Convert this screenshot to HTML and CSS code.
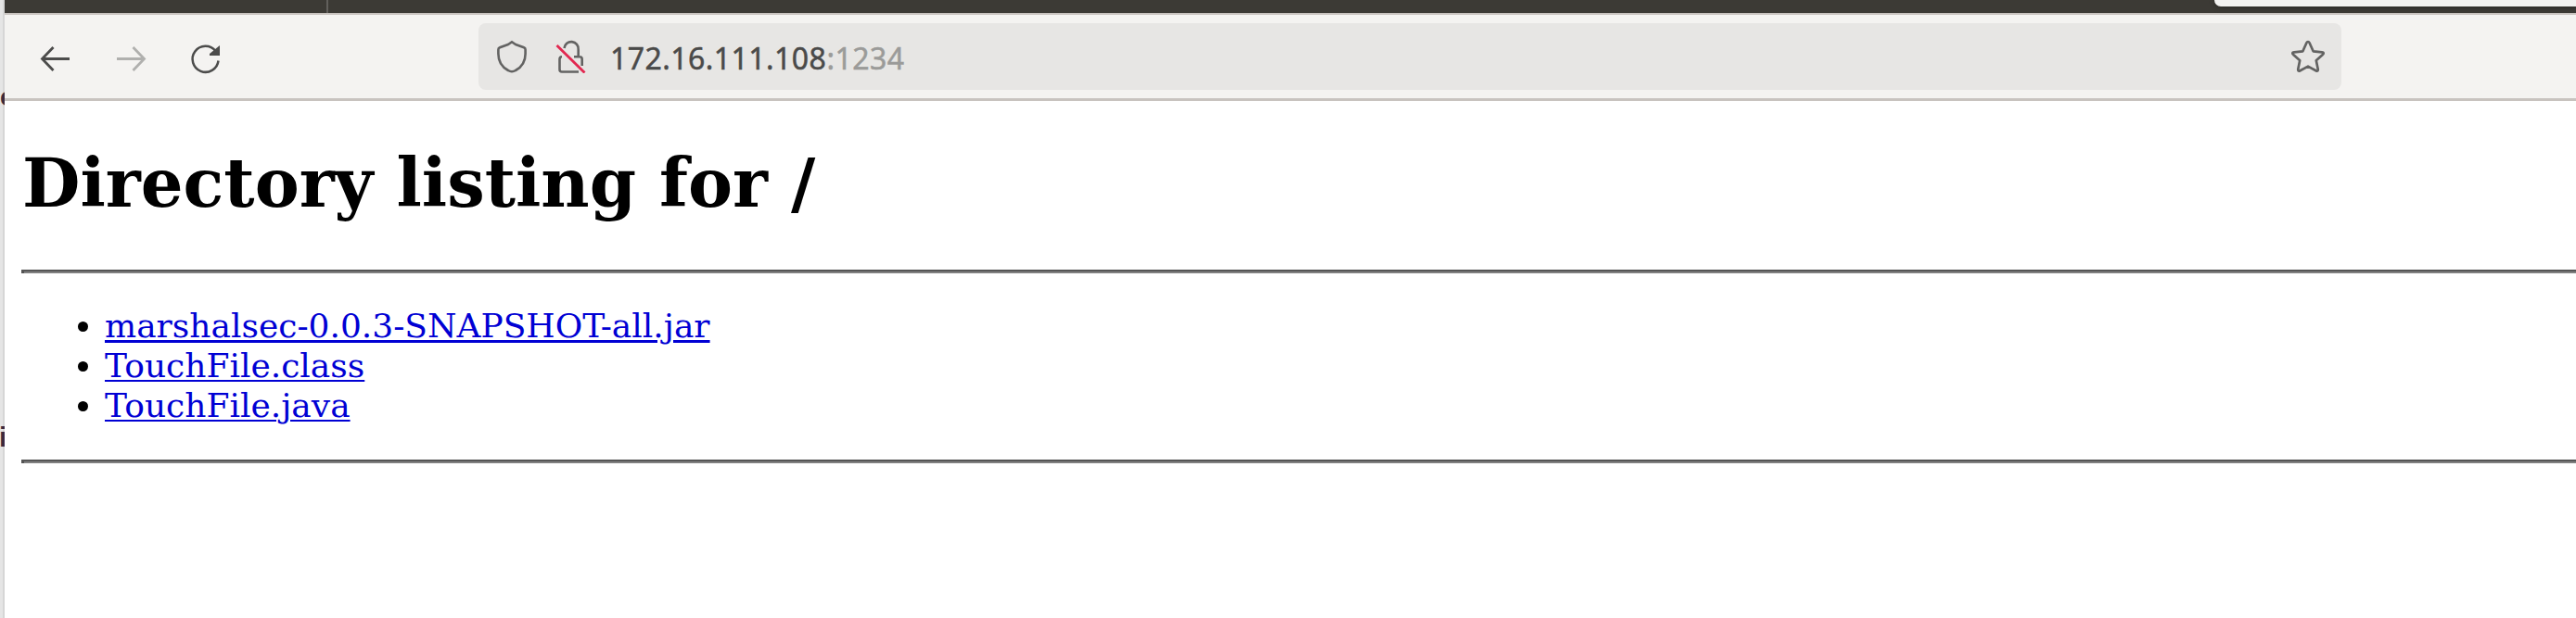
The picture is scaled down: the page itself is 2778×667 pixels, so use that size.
FILE: index.html
```html
<!DOCTYPE html>
<html lang="en">
<head>
<meta charset="utf-8">
<title>Directory listing for /</title>
<link rel="stylesheet" href="styles.css">
</head>
<body>
<div class="desktop">
  <div class="behind"><span class="peek peek-e">e</span><span class="peek peek-i">i</span></div>
  <div class="window">
    <div class="tabstrip"><div class="tab-first"></div><div class="tab-gap"></div><div class="popup-edge"></div></div>
    <div class="toolbar">
      <div class="nav">
        <svg class="icon" viewBox="0 0 36 36"><path d="M33 18.500H4M15.500 6 3.500 18.500l12 12.500" fill="none" stroke="#4c4c4b" stroke-width="2.800"/></svg>
        <svg class="icon" viewBox="0 0 36 36"><path d="M3 18.500h29M20.500 6l12 12.500-12 12.500" fill="none" stroke="#b0b0ae" stroke-width="2.800"/></svg>
        <svg class="icon" viewBox="0 0 36 36"><path d="M31.500 20.500A14 14 0 1 1 28.500 10" fill="none" stroke="#4c4c4b" stroke-width="2.500"/><path d="M33 4v11H22V13z" fill="#4c4c4b"/></svg>
      </div>
      <div class="urlbar">
        <svg class="icon" viewBox="0 0 36 36"><path d="M18 2.200 22 5l9 3.200q1.600.6 1.600 2.300v4.500c0 8-4.100 14.500-10.600 18q-4 2.400-8 0C7.500 29.500 3.400 23 3.400 15v-4.500q0-1.700 1.600-2.300L14 5z" fill="none" stroke="#636362" stroke-width="2.600" stroke-linejoin="round"/></svg>
        <svg class="icon lock" viewBox="0 0 36 36"><path d="M11.500 9a7.400 7.400 0 0 1 15.200 1.500V18M22 18.300h6q2.700 0 2.700 2.700v7M9 18.300q-2.500 0-2.500 2.700v11q0 2.500 2.500 2.500h18" fill="none" stroke="#636362" stroke-width="2.600"/><path d="M3.500 6 33.500 35.500" stroke="#e22850" stroke-width="2.800"/></svg>
        <div class="address">172.16.111.108<span class="port">:1234</span></div>
        <svg class="icon star" viewBox="0 0 36 36"><path d="M18 2q1 0 1.600 1.300l4 9 9.400 1q3 .4.800 2.600l-7 6.300 1.900 9.300q.4 3-2.200 1.700L18 28.600l-8.500 4.600q-2.600 1.300-2.200-1.700l1.900-9.300-7-6.300Q0 13.700 3 13.300l9.400-1 4-9Q17 2 18 2z" fill="none" stroke="#636362" stroke-width="2.700" stroke-linejoin="round"/></svg>
      </div>
    </div>
    <main class="page">
      <h1 class="title">Directory listing for /</h1>
      <div class="rule"></div>
      <ul class="files">
        <li><a class="first" href="#">marshalsec-0.0.3-SNAPSHOT-all.jar</a></li>
        <li><a href="#">TouchFile.class</a></li>
        <li><a href="#">TouchFile.java</a></li>
      </ul>
      <div class="rule"></div>
    </main>
  </div>
</div>
</body>
</html>
```
FILE: styles.css
```css
* { box-sizing: border-box; }
body { margin: 0; background: #fff; overflow: hidden; }
.desktop { display: flex; width: 2778px; height: 667px; }
.behind { position: relative; flex: none; width: 5px; overflow: hidden; background: linear-gradient(90deg, #e5e5e5 3px, #d6d6d6 3px); }
.peek { position: absolute; left: 0; color: #3b2b3d; font: bold 28px/30px "Liberation Sans", sans-serif; }
.peek-e { top: 90px; }
.peek-i { top: 457px; left: -1px; font-size: 30px; }
.window { flex: 1; min-width: 0; background: #fff; }
.tabstrip { display: flex; height: 16px; overflow: hidden; background: #3c3a35; border-bottom: 2px solid #c8c3bf; }
.tab-first { width: 349px; border-right: 2px solid #62605c; }
.tab-gap { width: 2034px; }
.popup-edge { flex: 1; height: 7px; background: #f3f2f0; border-bottom-left-radius: 7px; box-shadow: 0 1px 5px #2a2925; }
.toolbar { display: flex; align-items: center; height: 93px; padding-right: 253px; background: #f4f3f1; border-bottom: 3px solid #c8c3bf; }
.nav { display: flex; gap: 45px; width: 511px; padding: 3px 0 0 37px; }
.icon { display: block; flex: none; width: 36px; height: 36px; }
.urlbar { display: flex; align-items: center; flex: 1; height: 72px; padding: 0 18px; background: #e7e6e4; border-radius: 8px; }
.lock { margin-left: 27px; }
.address { flex: 1; margin-left: 25px; padding-top: 4px; color: #4a4a49; font: 400 32px/44px "Noto Sans", sans-serif; letter-spacing: 0.45px; white-space: nowrap; -webkit-text-stroke: 0.5px; }
.port { color: #9b9b99; }
.page { padding: 0 0 0 18px; font: 36px/43px "DejaVu Serif", serif; color: #000; }
.title { margin: 0; padding: 47px 0 51px 1px; font-size: 72px; line-height: 84px; font-weight: bold; }
.rule { height: 4px; border: solid #555; border-width: 2px 0 0 3px; background: #808080; }
.files { margin: 0; padding: 35px 0 37px 90px; }
.files li { height: 43px; }
.files a { color: #0000d4; text-decoration: underline; text-decoration-thickness: 2px; text-underline-offset: 3px; }
.files .first { text-decoration-thickness: 3px; }
```
